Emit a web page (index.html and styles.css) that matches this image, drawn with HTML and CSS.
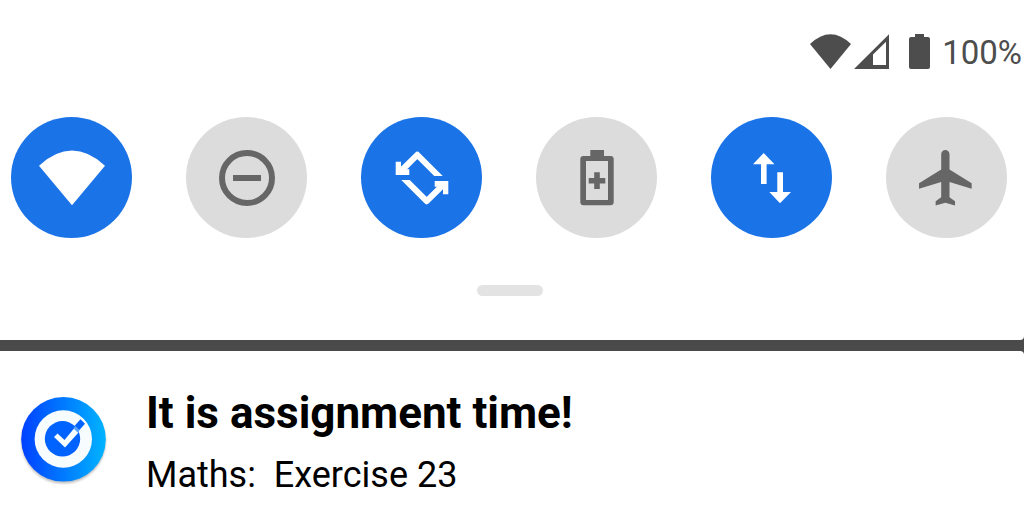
FILE: index.html
```html
<!DOCTYPE html>
<html lang="en">
<head>
<meta charset="utf-8">
<meta name="viewport" content="width=device-width, initial-scale=1">
<title>Quick settings</title>
<link rel="stylesheet" href="styles.css">
</head>
<body>
<main class="shade">
  <section class="panel" aria-label="Quick settings">
    <div class="status">
      <svg class="status-icons" viewBox="0 0 122 38" aria-hidden="true">
        <path d="M0 12Q20.500 -7.500 41 12L20.500 37Z"/>
        <path fill-rule="evenodd" d="M44 37L79 2.300V37ZM63 22.500V33H76V9.800Z"/>
        <path d="M105 2H114V5H118Q120 5 120 7V35Q120 37 118 37H101Q99 37 99 35V7Q99 5 101 5H105Z"/>
      </svg>
      <span class="percent">100%</span>
    </div>
    <div class="tiles">
      <button class="tile on" aria-label="Wi-Fi" aria-pressed="true">
        <svg viewBox="0 0 121 121"><path d="M28 48.700Q61 18.500 94 48.700L61 88.300Z"/></svg>
      </button>
      <button class="tile" aria-label="Do not disturb" aria-pressed="false">
        <svg viewBox="0 0 121 121"><circle class="line" cx="61" cy="61" r="25"/><path d="M47 58H75V64H47Z"/></svg>
      </button>
      <button class="tile on" aria-label="Auto-rotate" aria-pressed="true">
        <svg viewBox="0 0 121 121">
          <defs>
            <clipPath id="half"><path d="M30 30H90V59H30Z"/></clipPath>
            <g id="arrow" clip-path="url(#half)">
              <path class="line" d="M39 55L56.300 37.800L82 63.500"/>
              <path d="M34.700 44.700H40V52.300H48.300V58H34.700Z"/>
            </g>
          </defs>
          <use href="#arrow"/><use href="#arrow" transform="rotate(180 61 61)"/>
        </svg>
      </button>
      <button class="tile" aria-label="Battery saver" aria-pressed="false">
        <svg viewBox="0 0 121 121"><path fill-rule="evenodd" d="M54.300 33H68V39H74.500Q77.700 39 77.700 42.200V85Q77.700 88.300 74.500 88.300H47.500Q44.300 88.300 44.300 85V42.200Q44.300 39 47.500 39H54.300ZM50 44V83H72V44Z"/><path d="M58.200 55.300H63.800V61H69.300V66.500H63.800V72H58.200V66.500H52.700V61H58.200Z"/></svg>
      </button>
      <button class="tile on" aria-label="Mobile data" aria-pressed="true">
        <svg viewBox="0 0 121 121"><path d="M52.700 36L63.500 47.300H55.600V67H50V47.300H42ZM66.300 55.300H72V75H80L69 86.300L58.300 75H66.300Z"/></svg>
      </button>
      <button class="tile" aria-label="Airplane mode" aria-pressed="false">
        <svg viewBox="0 0 121 121"><path transform="translate(27.500 27.500) scale(2.770)" d="M21 16v-2l-8-5V3.500c0-.83-.67-1.500-1.500-1.500S10 2.670 10 3.500V9l-8 5v2l8-2.500V19l-2 1.500V22l3.500-1 3.500 1v-1.500L13 19v-5.500l8 2.500z"/></svg>
      </button>
    </div>
    <div class="handle"></div>
  </section>
  <article class="notice">
    <svg class="logo" viewBox="0 0 85 85" aria-hidden="true">
      <defs><linearGradient id="blue"><stop offset="0" stop-color="#0040ff"/><stop offset="1" stop-color="#00b4ff"/></linearGradient></defs>
      <circle cx="42.500" cy="42.300" r="42.300" fill="url(#blue)"/>
      <circle cx="42.300" cy="42" r="28.700" fill="#f7fcff"/>
      <circle cx="41.500" cy="41.800" r="17.700" fill="#0062ff"/>
      <path d="M33 40L36.500 36.500L43.500 43L53 31.500L57.500 35.500L44 50.500Z" fill="#f7fcff"/>
      <path d="M53 29.500L59.500 22.300L64 26.800L57.500 34Z" fill="#0062ff"/>
      <path d="M52.500 31L54.500 29L58.500 33L56.500 35.500Z" fill="#58a2ff"/>
    </svg>
    <div class="message">
      <h1 class="title">It is assignment time!</h1>
      <p class="detail">Maths:&nbsp; Exercise 23</p>
    </div>
  </article>
</main>
</body>
</html>
```
FILE: styles.css
```css
* {
  box-sizing: border-box;
}

body {
  margin: 0;
  background: #4a4a4a;
  font-family: Roboto, "Liberation Sans", sans-serif;
}

.shade {
  display: flex;
  flex-direction: column;
  gap: 11px;
  min-height: 100vh;
}

.panel {
  display: flex;
  flex-direction: column;
  padding: 32px 0 44px;
  background: #fff;
  border-bottom-right-radius: 4px;
}

.status {
  display: flex;
  justify-content: flex-end;
  align-items: flex-start;
  gap: 10px;
  height: 38px;
  padding-right: 2px;
  color: #4d4d4d;
}

.status-icons {
  width: 122px;
  height: 38px;
  fill: currentColor;
}

.percent {
  font-size: 33px;
  line-height: 42px;
}

.tiles {
  display: flex;
  justify-content: space-between;
  margin: 47px 17px 0 11px;
}

.tile {
  width: 121px;
  height: 121px;
  padding: 0;
  border: 0;
  border-radius: 50%;
  background: #dcdcdc;
  color: #666;
}

.tile.on {
  background: #1b73e8;
  color: #fff;
}

.tile svg {
  display: block;
  width: 100%;
  fill: currentColor;
}

.tile .line {
  fill: none;
  stroke: currentColor;
  stroke-width: 6px;
  stroke-linejoin: round;
}

.handle {
  align-self: center;
  width: 66px;
  height: 11px;
  margin: 47px 4px 0 0;
  border-radius: 6px;
  background: #e3e3e3;
}

.notice {
  display: flex;
  flex: 1;
  gap: 40px;
  padding: 36px 21px 22px;
  background: #fff;
  border-top-right-radius: 4px;
}

.logo {
  flex: none;
  width: 85px;
  height: 85px;
  margin-top: 10px;
  filter: drop-shadow(0 2px 1px rgb(0 0 0 / 25%));
}

.title,
.detail {
  margin: 0;
  color: #000;
}

.title {
  font-size: 44px;
  line-height: 52px;
  font-weight: 700;
}

.detail {
  margin-top: 14px;
  font-size: 36px;
  line-height: 44px;
}
```
